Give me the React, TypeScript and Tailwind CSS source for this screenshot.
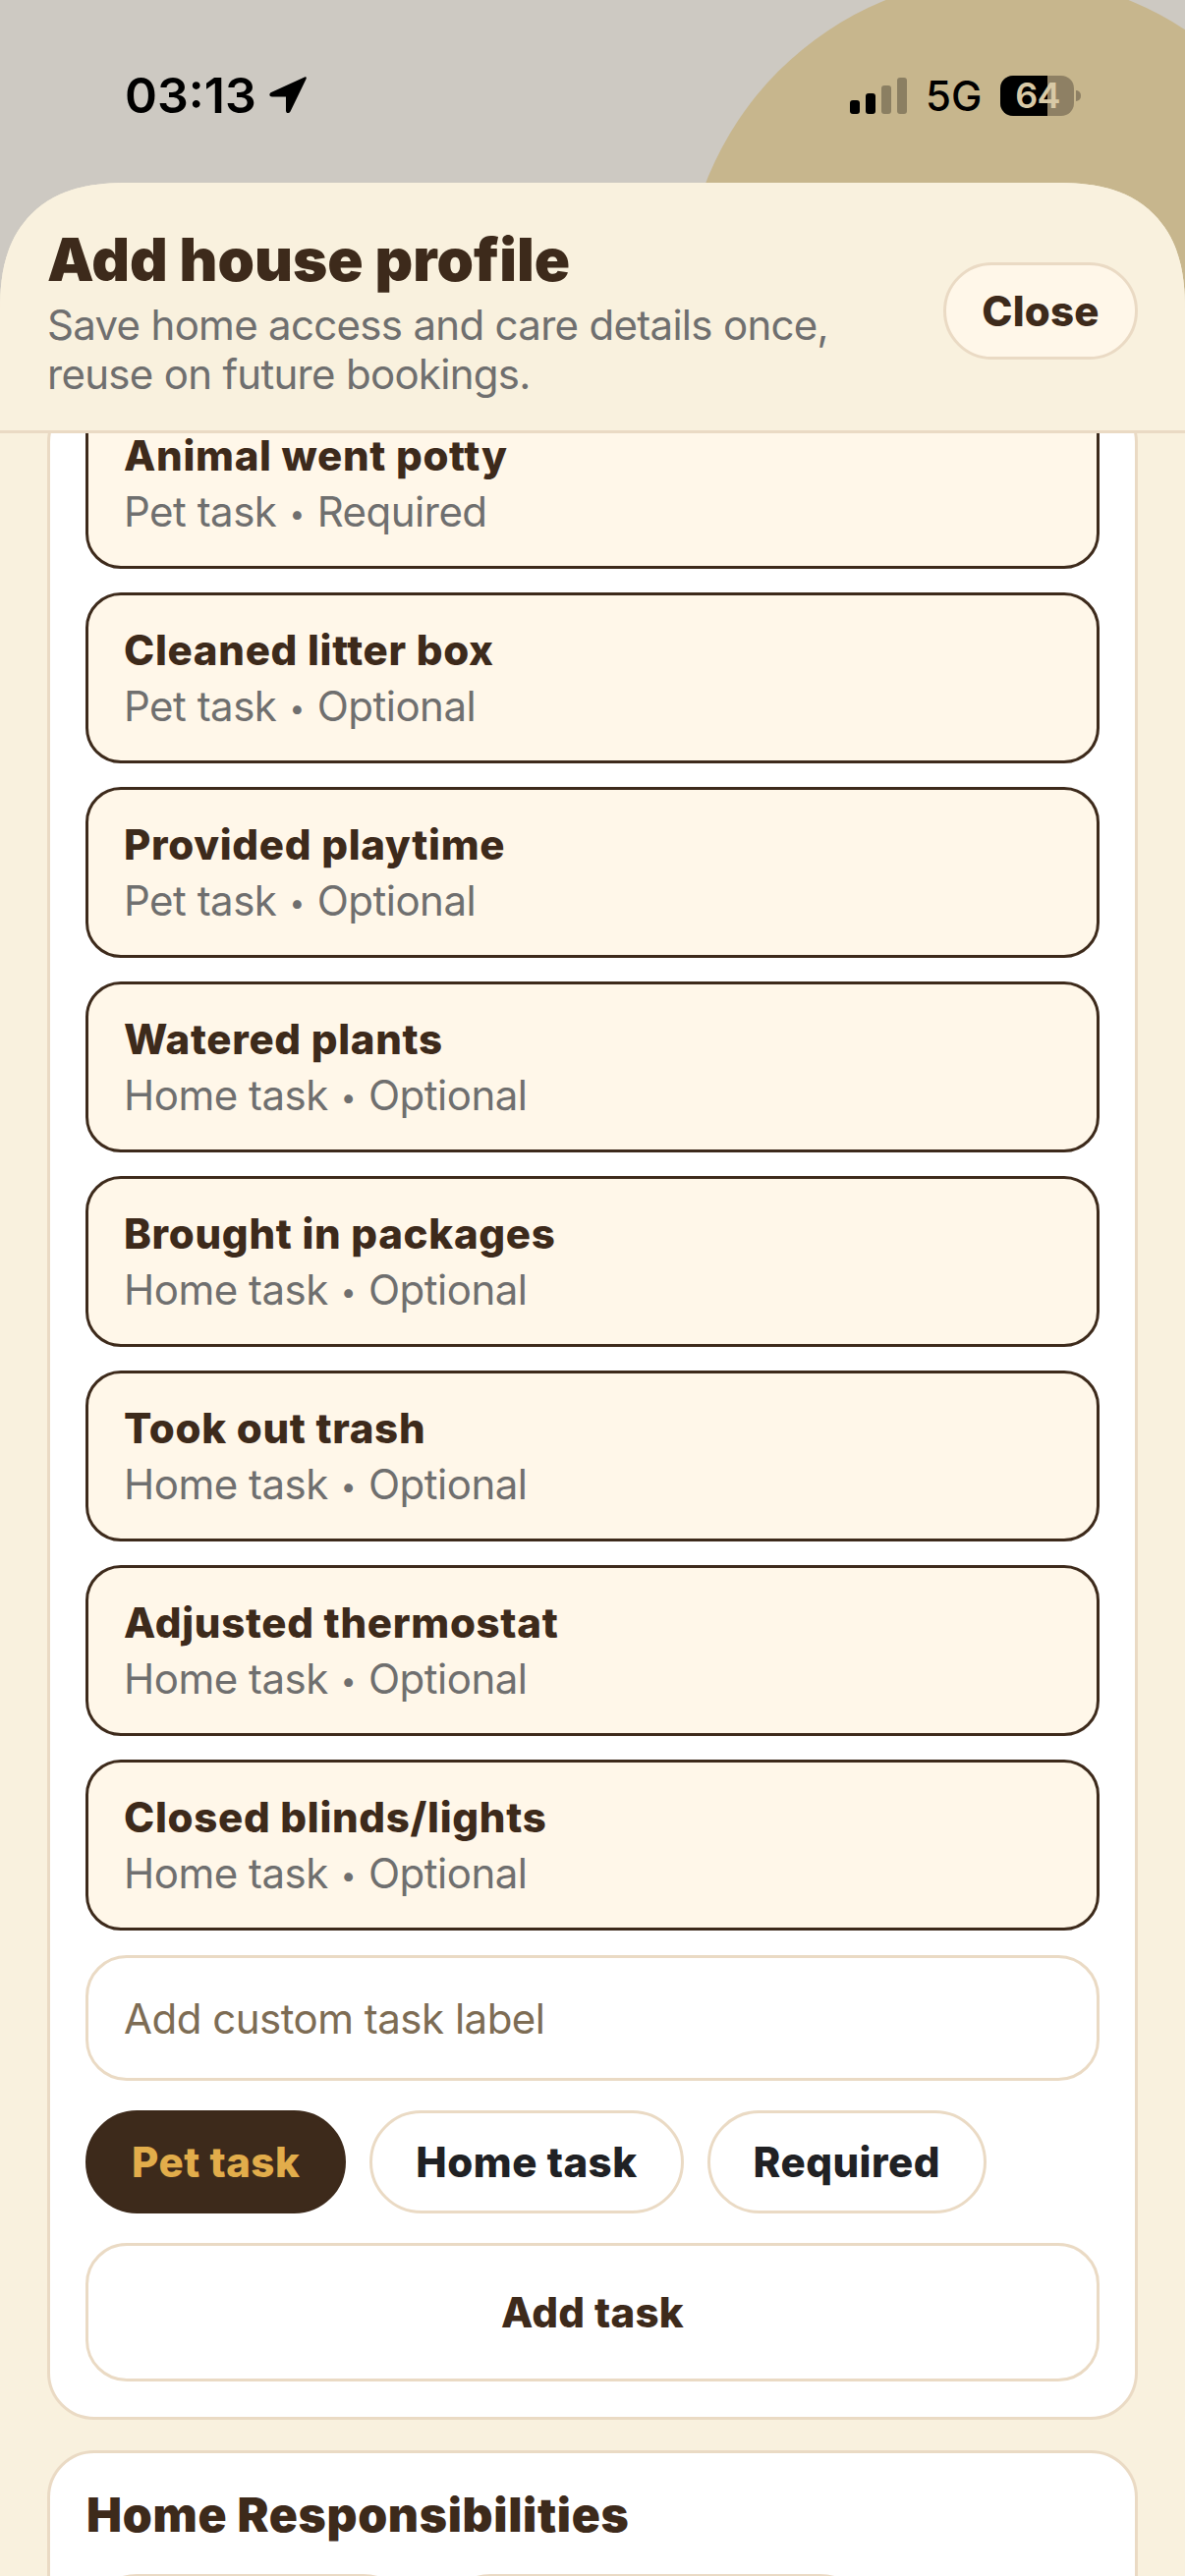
const tasks = [
  { title: 'Animal went potty', kind: 'Pet task', need: 'Required' },
  { title: 'Cleaned litter box', kind: 'Pet task', need: 'Optional' },
  { title: 'Provided playtime', kind: 'Pet task', need: 'Optional' },
  { title: 'Watered plants', kind: 'Home task', need: 'Optional' },
  { title: 'Brought in packages', kind: 'Home task', need: 'Optional' },
  { title: 'Took out trash', kind: 'Home task', need: 'Optional' },
  { title: 'Adjusted thermostat', kind: 'Home task', need: 'Optional' },
  { title: 'Closed blinds/lights', kind: 'Home task', need: 'Optional' },
]

function StatusBar() {
  return (
    <div className="relative h-[186px] shrink-0">
      <div className="absolute left-[127px] top-[67px] flex items-center gap-[12px]">
        <span className="text-[50px] leading-[60px] font-semibold text-black">03:13</span>
        <svg width="40" height="40" viewBox="0 0 40 40">
          <path d="M37 1.5 L3 17 C0.5 18.5 1 21.5 4 21.5 L18 21.5 L18 35.5 C18 38.5 21 39 22.5 36.5 L38.5 3.5 C39.3 1.8 38.6 0.8 37 1.5 Z" fill="#000" />
        </svg>
      </div>
      <div className="absolute left-[865px] top-[77px] flex items-center">
        <svg width="58" height="41" viewBox="0 0 58 41">
          <rect x="0" y="25" width="10" height="14" rx="3" fill="#000" />
          <rect x="16" y="18" width="10" height="21" rx="3" fill="#000" />
          <rect x="32" y="10" width="10" height="29" rx="3" fill="#000" fillOpacity="0.3" />
          <rect x="48" y="2" width="10" height="37" rx="3" fill="#000" fillOpacity="0.3" />
        </svg>
        <span className="ml-[19px] text-[42px] leading-[41px] font-medium text-black">5G</span>
        <div className="relative ml-[19px] flex h-[41px] w-[75px] items-center justify-center rounded-[13px] bg-[#8e8064]">
          <div className="absolute inset-y-0 left-0 w-[48px] rounded-l-[13px] bg-black" />
          <span className="relative text-[36px] leading-[41px] font-semibold tracking-[-1px] text-[#d8c9a6]">64</span>
        </div>
        <div className="ml-[2px] h-[11px] w-[5px] rounded-r-full bg-[#8e8064]" />
      </div>
    </div>
  )
}

function TaskCard({ title, kind, need }: { title: string; kind: string; need: string }) {
  return (
    <div className="flex h-[174px] flex-col rounded-[36px] border-[3px] border-[#3d2a1b] bg-[#fff7e9] px-[36px] pt-[29px]">
      <div className="text-[42px] leading-[54px] font-extrabold tracking-[0.7px] text-[#3d2a1b]">{title}</div>
      <div className="mt-[3px] text-[42px] leading-[54px] tracking-[-0.5px] text-[#6f6f6f]">
        {kind}
        <span className="mx-[13px] align-[3px] text-[28px]">•</span>
        {need}
      </div>
    </div>
  )
}

function Pill({ label, active }: { label: string; active?: boolean }) {
  return (
    <button
      className={
        active
          ? 'h-[105px] rounded-full border-[3px] border-[#3d2a1b] bg-[#3d2a1b] px-[44px] text-[42px] font-extrabold tracking-[0.5px] text-[#e2ad4b]'
          : 'h-[105px] rounded-full border-[3px] border-[#eadac4] bg-white px-[44px] text-[42px] font-extrabold tracking-[0.5px] text-[#202124]'
      }
    >
      {label}
    </button>
  )
}

export default function App() {
  return (
    <div className="relative flex h-[2622px] w-[1206px] flex-col overflow-hidden bg-[#cdc9c2] font-['Inter',sans-serif]">
      {/* tan circle behind the status bar */}
      <div className="absolute left-[696px] top-[-24px] h-[658px] w-[658px] rounded-full bg-[#c7b68d]" />

      <StatusBar />

      <div className="relative flex min-h-0 flex-1 flex-col overflow-hidden rounded-t-[130px] bg-[#f9f1de] [corner-shape:superellipse(1.3)]">
        <header className="relative z-10 flex h-[255px] shrink-0 items-start justify-between border-b-[3px] border-[#eadac4] bg-[#f9f1de] px-[48px] pt-[42px]">
          <div>
            <h1 className="text-[60px] leading-[72px] font-black text-[#3d2a1b]">Add house profile</h1>
            <p className="mt-[6px] w-[860px] text-[42px] leading-[50px] tracking-[-0.7px] text-[#6f6f6f]">
              Save home access and care details once, reuse on future bookings.
            </p>
          </div>
          <button className="mt-[39px] h-[99px] w-[198px] rounded-full border-[3px] border-[#eadac4] bg-[#fff7e9] text-[42px] font-extrabold tracking-[0.2px] text-[#3d2a1b]">
            Close
          </button>
        </header>

        {/* scrolled content, first card is partly under the header */}
        <div className="-mt-[39px] flex flex-col gap-[31px] px-[48px]">
          <section className="flex flex-col rounded-[48px] border-[3px] border-[#eadac4] bg-white px-[36px] pb-[36px]">
            <div className="flex flex-col gap-[24px]">
              {tasks.map((t) => (
                <TaskCard key={t.title} {...t} />
              ))}
            </div>
            <div className="mt-[25px] flex h-[128px] items-center rounded-[42px] border-[3px] border-[#eadac4] bg-white px-[36px] text-[42px] tracking-[-0.5px] text-[#7d6c54]">
              Add custom task label
            </div>
            <div className="mt-[30px] flex gap-[24px]">
              <Pill label="Pet task" active />
              <Pill label="Home task" />
              <Pill label="Required" />
            </div>
            <button className="mt-[30px] h-[141px] rounded-[42px] border-[3px] border-[#eadac4] bg-white text-[42px] font-extrabold tracking-[0.3px] text-[#3d2a1b]">
              Add task
            </button>
          </section>

          <section className="rounded-[48px] border-[3px] border-[#eadac4] bg-white px-[36px] pt-[33px]">
            <h2 className="ml-[1px] text-[48px] leading-[60px] font-black tracking-[0.7px] text-[#3d2a1b]">Home Responsibilities</h2>
            <div className="mt-[30px] flex gap-[25px]">
              <div className="h-[105px] w-[335px] rounded-full border-[3px] border-[#eadac4] bg-white" />
              <div className="h-[105px] w-[440px] rounded-full border-[3px] border-[#eadac4] bg-white" />
            </div>
          </section>
        </div>
      </div>
    </div>
  )
}
